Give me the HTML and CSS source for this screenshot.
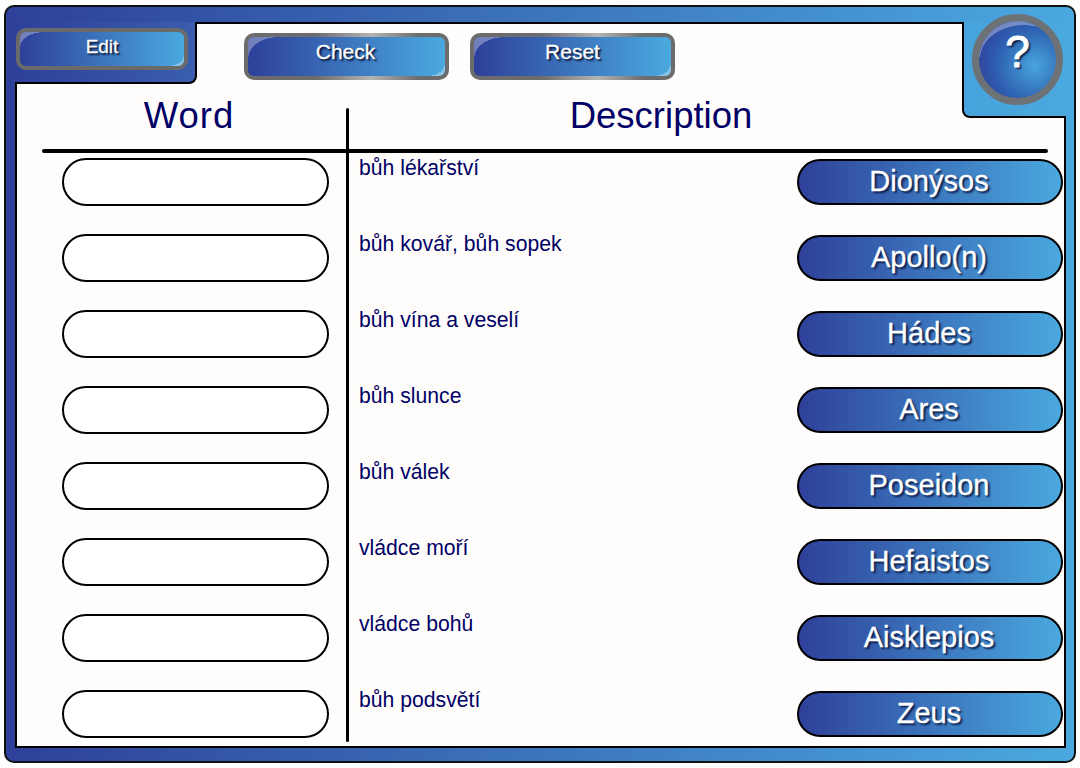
FILE: index.html
```html
<!DOCTYPE html>
<html lang="en">
<head>
    <meta charset="UTF-8">
    <title>Word match</title>
    <link rel="stylesheet" href="styles.css">
</head>
<body>
    <div class="frame">
        <div class="panel">
            <!-- Top bar -->
            <div class="topbar">
                <div class="tab tab-left">
                    <button class="gloss-btn edit-btn">Edit</button>
                </div>
                <div class="toolbar">
                    <button class="gloss-btn tool-btn check-btn">Check</button>
                    <button class="gloss-btn tool-btn reset-btn">Reset</button>
                </div>
                <div class="tab tab-right">
                    <button class="help-btn">?</button>
                </div>
            </div>

            <!-- Game table -->
            <div class="table">
                <div class="heading heading-word">Word</div>
                <div class="heading heading-desc">Description</div>
                <div class="rule"></div>
                <div class="divider"></div>

                <div class="slot-cell"><input class="slot" type="text"></div>
                <div class="desc-cell"><span class="desc">bůh lékařství</span><button class="choice">Dionýsos</button></div>

                <div class="slot-cell"><input class="slot" type="text"></div>
                <div class="desc-cell"><span class="desc">bůh kovář, bůh sopek</span><button class="choice">Apollo(n)</button></div>

                <div class="slot-cell"><input class="slot" type="text"></div>
                <div class="desc-cell"><span class="desc">bůh vína a veselí</span><button class="choice">Hádes</button></div>

                <div class="slot-cell"><input class="slot" type="text"></div>
                <div class="desc-cell"><span class="desc">bůh slunce</span><button class="choice">Ares</button></div>

                <div class="slot-cell"><input class="slot" type="text"></div>
                <div class="desc-cell"><span class="desc">bůh válek</span><button class="choice">Poseidon</button></div>

                <div class="slot-cell"><input class="slot" type="text"></div>
                <div class="desc-cell"><span class="desc">vládce moří</span><button class="choice">Hefaistos</button></div>

                <div class="slot-cell"><input class="slot" type="text"></div>
                <div class="desc-cell"><span class="desc">vládce bohů</span><button class="choice">Aisklepios</button></div>

                <div class="slot-cell"><input class="slot" type="text"></div>
                <div class="desc-cell"><span class="desc">bůh podsvětí</span><button class="choice">Zeus</button></div>
            </div>
        </div>
    </div>
</body>
</html>
```

FILE: styles.css
```css
body {
    margin: 0;
    padding: 5px 4px;
    background: #fff;
    font-family: "Liberation Sans", Arial, sans-serif;
}
button { font-family: inherit; padding: 0; cursor: pointer; }

.frame {
    box-sizing: border-box;
    width: 1072px;
    height: 758px;
    padding: 15px 0 0 9px;
    border: 2px solid #111;
    border-radius: 10px;
    background: linear-gradient(to right, #2e409a, #4aa9df);
}
.panel {
    box-sizing: border-box;
    width: 1051px;
    height: 726px;
    border: 2px solid #000;
    background: #fffdfb;
}

/* Top bar */
.topbar {
    display: flex;
    align-items: flex-start;
    height: 62px;
    margin: -2px -2px 0;
}
.tab { box-sizing: border-box; flex: none; }
.tab-left {
    width: 182px;
    height: 62px;
    padding: 6px 0 0 1px;
    border-right: 2px solid #000;
    border-bottom: 2px solid #000;
    border-bottom-right-radius: 8px;
    background: linear-gradient(to right, #2e409a, #3a5dae);
}
.tab-right {
    position: relative;
    width: 104px;
    height: 96px;
    padding: 0 0 0 8px;
    border-left: 2px solid #000;
    border-bottom: 2px solid #000;
    border-bottom-left-radius: 8px;
    background: linear-gradient(to right, #47a3db, #4aa9df);
}
.toolbar {
    flex: 1;
    display: flex;
    gap: 21px;
    padding: 11px 0 0 47px;
}

/* Glossy buttons */
.gloss-btn {
    position: relative;
    box-sizing: border-box;
    overflow: hidden;
    border: 4px solid transparent;
    border-radius: 10px;
    color: #fff;
    -webkit-text-stroke: 0.3px #fff;
    text-shadow: 2px 2px 2px #0a1a44, 1px 1px 1px #0a1a44;
    background:
        linear-gradient(to right, #2e409a, #4aa9df) padding-box,
        linear-gradient(to right, #6c6c6c, #6c6c6c 35%, #b4b4b4 62%, #6c6c6c 85%) border-box;
}
.gloss-btn::before,
.gloss-btn::after {
    content: "";
    position: absolute;
}
.gloss-btn::before {
    top: 0;
    left: 0;
    width: 30px;
    height: 21px;
    background: radial-gradient(ellipse 100% 100% at 100% 100%, transparent 98%, rgba(255, 255, 255, 0.32) 100%);
}
.gloss-btn::after {
    right: 0;
    bottom: 0;
    width: 17px;
    height: 13px;
    background: radial-gradient(ellipse 100% 100% at 0 0, transparent 98%, rgba(255, 255, 255, 0.32) 100%);
}
.edit-btn {
    width: 172px;
    height: 42px;
    padding-bottom: 5px;
    font-size: 19px;
    background:
        linear-gradient(to right, #2e409a, #4aa9df) padding-box,
        linear-gradient(#6a6a6a, #6a6a6a) border-box;
}
.edit-btn::before { width: 24px; height: 15px; }
.edit-btn::after { width: 15px; height: 11px; }
.tool-btn { height: 47px; padding-bottom: 10px; font-size: 21px; }
.check-btn { width: 205px; padding-right: 2px; }
.reset-btn { width: 205px; }

.help-btn {
    position: relative;
    overflow: hidden;
    box-sizing: border-box;
    width: 91px;
    height: 91px;
    margin-top: -8px;
    padding-bottom: 16px;
    border: 7px solid #6d7276;
    border-radius: 50%;
    color: #fff;
    font-size: 44px;
    -webkit-text-stroke: 1px #fff;
    line-height: 60px;
    text-shadow: 2px 2px 2px #0a1a44;
    background: radial-gradient(circle at 72% 58%, #47a5dc, #2f63b3 50%, #2e409a 85%);
}
.help-btn::before,
.help-btn::after {
    content: "";
    position: absolute;
    left: 0;
    right: 0;
}
.help-btn::before {
    top: 0;
    height: 36px;
    background: radial-gradient(ellipse 44px 34px at 58% 105%, transparent 98%, rgba(255, 255, 255, 0.33) 100%);
}
.help-btn::after {
    bottom: 0;
    height: 22px;
    background: radial-gradient(ellipse 46px 30px at 40% -20%, transparent 98%, rgba(255, 255, 255, 0.25) 100%);
}

/* Game table */
.table {
    display: grid;
    grid-template-columns: 304px 3px 714px;
    grid-template-rows: 66px 3px repeat(7, 76px) 57px;
    margin-left: 25px;
}
.heading {
    grid-row: 1;
    align-self: end;
    padding-bottom: 14px;
    color: #000066;
    font-size: 36.5px;
    line-height: 40px;
    text-align: center;
}
.heading-word { grid-column: 1; padding-right: 10px; letter-spacing: 1px; }
.heading-desc { grid-column: 3; padding-right: 90px; }
.rule {
    grid-column: 1 / -1;
    grid-row: 2;
    width: 1006px;
    height: 4px;
    margin-top: -1px;
    border-radius: 2px;
    background: #000;
}
.divider {
    grid-column: 2;
    grid-row: 1 / -1;
    margin-top: 24px;
    border-radius: 2px;
    background: #000;
}
.slot-cell { grid-column: 1; padding: 5px 0 0 20px; }
.slot {
    display: block;
    box-sizing: border-box;
    width: 267px;
    height: 48px;
    border: 2px solid #000;
    border-radius: 24px;
    background: #fff;
}
.desc-cell {
    grid-column: 3;
    display: flex;
    justify-content: space-between;
    align-items: flex-start;
    padding-left: 10px;
}
.desc {
    padding-top: 2px;
    color: #000066;
    font-size: 21.2px;
    line-height: 26px;
}
.choice {
    box-sizing: border-box;
    width: 266px;
    height: 46px;
    margin-top: 6px;
    padding: 0 2px 2px 0;
    border: 2px solid #000;
    border-radius: 23px;
    color: #fff;
    font-size: 29px;
    -webkit-text-stroke: 0.3px #fff;
    text-shadow: 2px 2px 2px #0a1a44;
    background: linear-gradient(to right, #2e409a, #4aa9df);
}
```
